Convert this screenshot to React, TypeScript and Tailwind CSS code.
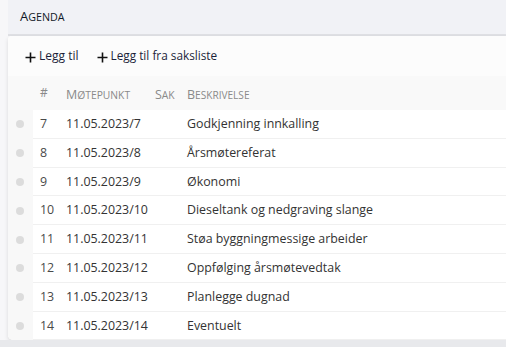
import React from "react";

const rows = [
  { n: 7, d: "11.05.2023/7", b: "Godkjenning innkalling" },
  { n: 8, d: "11.05.2023/8", b: "Årsmøtereferat" },
  { n: 9, d: "11.05.2023/9", b: "Økonomi" },
  { n: 10, d: "11.05.2023/10", b: "Dieseltank og nedgraving slange" },
  { n: 11, d: "11.05.2023/11", b: "Støa byggningmessige arbeider" },
  { n: 12, d: "11.05.2023/12", b: "Oppfølging årsmøtevedtak" },
  { n: 13, d: "11.05.2023/13", b: "Planlegge dugnad" },
  { n: 14, d: "11.05.2023/14", b: "Eventuelt" },
];

function Plus() {
  return (
    <svg width="11" height="11" viewBox="0 0 11 11" className="mt-[5px] mr-[3px] shrink-0">
      <path d="M5.5 0.5V10.5M0.5 5.5H10.5" stroke="#111" strokeWidth="1.6" />
    </svg>
  );
}

function SC({ first, rest, big, small }: { first: string; rest: string; big: string; small: string }) {
  return (
    <span className="whitespace-nowrap">
      <span className={big}>{first}</span>
      <span className={small}>{rest}</span>
    </span>
  );
}

export default function App() {
  return (
    <div
      className="w-[506px] h-[347px] overflow-hidden bg-[#f7f7f9] flex flex-col text-[#333]"
      style={{ fontFamily: '"Open Sans", "Noto Sans", sans-serif' }}
    >
      <div className="h-[34px] ml-[8px] bg-[#f1f2f6] flex items-center pl-[12px] shrink-0">
        <span className="text-[#111827] mt-[-4px] leading-none">
          <SC first="A" rest="GENDA" big="text-[13px]" small="text-[10.7px]" />
        </span>
      </div>
      <div className="h-[2px] ml-[8px] bg-[#dfe0e4] shrink-0" />
      <div className="ml-[8px] h-[304px] rounded-bl-[5px] rounded-tl-[4px] bg-white shadow-[0_2px_4px_rgba(0,0,0,0.12)] overflow-hidden flex flex-col shrink-0">
        <div className="h-[40px] bg-[#fcfcfc] flex items-center pl-[17px] gap-[18px] shrink-0">
          <div className="flex items-start text-[12px] text-[#1b1f3a]">
            <Plus />
            <span>Legg til</span>
          </div>
          <div className="flex items-start text-[11.8px] text-[#1b1f3a]">
            <Plus />
            <span>Legg til fra saksliste</span>
          </div>
        </div>
        <div className="h-[34px] bg-[#f9f9f9] flex items-center text-[#8a8a8a] shrink-0 leading-none">
          <div className="w-[32px] shrink-0" />
          <div className="w-[26px] shrink-0 text-[12px]">#</div>
          <div className="w-[89px] shrink-0">
            <SC first="M" rest="ØTEPUNKT" big="text-[12.5px]" small="text-[10.3px]" />
          </div>
          <div className="w-[32px] shrink-0">
            <SC first="S" rest="AK" big="text-[12.5px]" small="text-[10.3px]" />
          </div>
          <div>
            <SC first="B" rest="ESKRIVELSE" big="text-[12.5px]" small="text-[10.1px]" />
          </div>
        </div>
        <div className="flex flex-col">
          {rows.map((r) => (
            <div key={r.n} className="flex h-[28.8px] items-stretch">
              <div className="w-[25px] bg-[#f8f8f8] flex items-center justify-center shrink-0">
                <div className="w-[8px] h-[8px] rounded-full bg-[#dcdcdc] ml-[-1px]" />
              </div>
              <div className="flex-1 flex items-center border-b border-[#f0f0f0] text-[12.4px] pt-[1px]">
                <div className="w-[7px] shrink-0" />
                <div className="w-[26px] shrink-0 text-[#4a4a4a]">{r.n}</div>
                <div className="w-[89px] shrink-0 text-[#333]">{r.d}</div>
                <div className="w-[32px] shrink-0" />
                <div className="text-[#333]">{r.b}</div>
              </div>
            </div>
          ))}
        </div>
      </div>
      <div className="flex-1 bg-[#e8e9ec]" />
    </div>
  );
}
